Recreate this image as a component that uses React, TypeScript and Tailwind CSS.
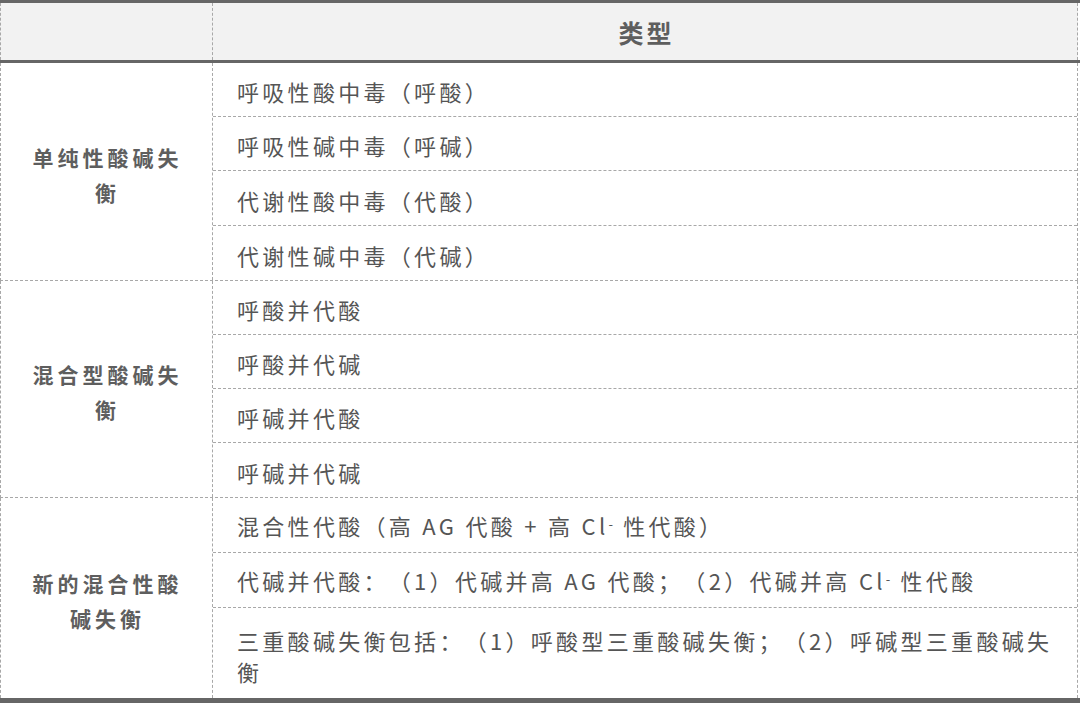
import React from "react";

const font = {
  fontFamily: '"Noto Sans CJK SC", "Noto Sans", sans-serif',
};

function Cl() {
  return (
    <>
      Cl<span className="relative top-[-6px] text-[13px] tracking-[2px]">-</span>
    </>
  );
}

type Row = { h: string; content: React.ReactNode; last?: boolean };

function Group({
  label,
  rows,
  last,
}: {
  label: React.ReactNode;
  rows: Row[];
  last?: boolean;
}) {
  return (
    <div
      className={
        "flex w-[1078px] border-l border-r border-dashed border-[#a8a8a8] " +
        (last ? "" : "border-b")
      }
    >
      <div className="w-[212px] shrink-0 border-r border-dashed border-[#a8a8a8] flex items-center justify-center pt-[6px]">
        <div className="text-center text-[21px] font-bold leading-[35px] tracking-[4px] text-[#5e5e5e] pl-[2px] [text-spacing-trim:space-all]">
          {label}
        </div>
      </div>
      <div className="flex-1 flex flex-col">
        {rows.map((r, i) => (
          <div
            key={i}
            className={
              "flex items-center pl-[24px] text-[22px] leading-[31px] tracking-[3.3px] text-[#555] whitespace-nowrap [text-spacing-trim:space-all] " +
              r.h +
              (i < rows.length - 1 ? " border-b border-dashed border-[#a8a8a8]" : "")
            }
          >
            <div className={r.last ? "pt-[6px]" : "pt-[4px]"}>{r.content}</div>
          </div>
        ))}
      </div>
    </div>
  );
}

export default function App() {
  return (
    <div className="w-[1080px] h-[704px] bg-white overflow-hidden" style={font}>
      <div className="w-[1080px] border-t-[3px] border-b-[3px] border-solid border-[#666]">
        <div className="flex w-[1078px] h-[57px] bg-[#f2f2f2] border-l border-r border-dashed border-[#a8a8a8]">
          <div className="w-[212px] shrink-0 border-r border-dashed border-[#a8a8a8]" />
          <div className="flex-1 flex items-center justify-center pl-[3px] pt-[2px] text-[25px] font-bold tracking-[3px] text-[#5e5e5e]">
            类型
          </div>
        </div>
      </div>
      <Group
        label={
          <>
            单纯性酸碱失
            <br />衡
          </>
        }
        rows={[
          { h: "h-[54px]", content: "呼吸性酸中毒（呼酸）" },
          { h: "h-[54px]", content: "呼吸性碱中毒（呼碱）" },
          { h: "h-[55px]", content: "代谢性酸中毒（代酸）" },
          { h: "h-[54px]", content: "代谢性碱中毒（代碱）" },
        ]}
      />
      <Group
        label={
          <>
            混合型酸碱失
            <br />衡
          </>
        }
        rows={[
          { h: "h-[54px]", content: "呼酸并代酸" },
          { h: "h-[54px]", content: "呼酸并代碱" },
          { h: "h-[54px]", content: "呼碱并代酸" },
          { h: "h-[54px]", content: "呼碱并代碱" },
        ]}
      />
      <Group
        last
        label={
          <>
            新的混合性酸
            <br />
            碱失衡
          </>
        }
        rows={[
          {
            h: "h-[55px]",
            content: (
              <>
                混合性代酸（高 AG 代酸 + 高 <Cl /> 性代酸）
              </>
            ),
          },
          {
            h: "h-[55px]",
            content: (
              <>
                代碱并代酸：（1）代碱并高 AG 代酸；（2）代碱并高 <Cl /> 性代酸
              </>
            ),
          },
          {
            h: "h-[90px]",
            last: true,
            content: (
              <>
                三重酸碱失衡包括：（1）呼酸型三重酸碱失衡；（2）呼碱型三重酸碱失
                <br />衡
              </>
            ),
          },
        ]}
      />
      <div className="w-[1080px] h-[5px] bg-[#666]" />
    </div>
  );
}
